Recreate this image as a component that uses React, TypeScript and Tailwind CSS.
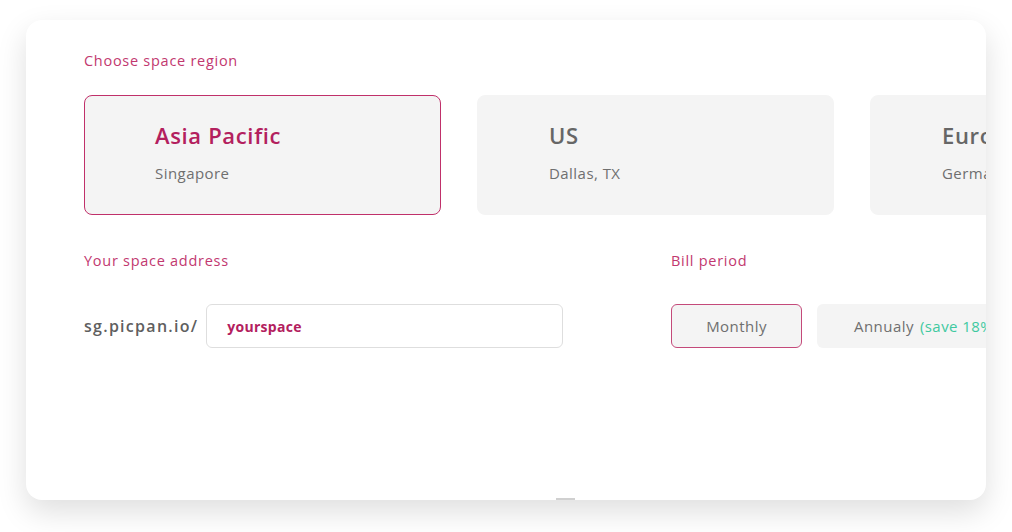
import React from "react";

interface RegionCardProps {
  title: string;
  city: string;
  selected?: boolean;
}

function RegionCard({ title, city, selected }: RegionCardProps) {
  return (
    <div
      className={
        selected
          ? "w-[357px] h-[120px] shrink-0 rounded-lg bg-[#f4f4f4] border border-[#c0306a] pl-[70px] pt-[24px]"
          : "w-[357px] h-[120px] shrink-0 rounded-lg bg-[#f4f4f4] border border-[#f4f4f4] pl-[71px] pt-[24px]"
      }
    >
      <p
        className={
          selected
            ? "text-[22px] leading-[30px] font-semibold tracking-[0.03em] text-[#b3205e]"
            : "text-[22px] leading-[30px] font-semibold tracking-[0.03em] text-[#666666]"
        }
      >
        {title}
      </p>
      <p className="mt-3 text-[15px] leading-[22px] tracking-[0.03em] text-[#6f6f6f]">{city}</p>
    </div>
  );
}

export default function App() {
  return (
    <div
      className="w-[1012px] h-[532px] bg-white pt-5 pl-[26px]"
      style={{ fontFamily: '"Open Sans", "Noto Sans", sans-serif' }}
    >
      <div className="relative w-[960px] h-[480px] rounded-2xl bg-white shadow-[0_12px_30px_rgba(0,0,0,0.13)]">
        <div className="w-full h-full overflow-hidden rounded-2xl pl-[58px] pt-[31px]">
          <p className="text-[14.5px] leading-5 tracking-[0.05em] text-[#c2386f]">Choose space region</p>

          <div className="mt-6 flex gap-9">
            <RegionCard title="Asia Pacific" city="Singapore" selected />
            <RegionCard title="US" city="Dallas, TX" />
            <RegionCard title="Europe" city="Germany" />
          </div>

          <div className="mt-9 flex">
            <div className="w-[587px] shrink-0">
              <p className="text-[14.5px] leading-5 tracking-[0.05em] text-[#c2386f]">Your space address</p>
              <div className="mt-[33px] flex items-center gap-[8px]">
                <span className="text-[16px] font-semibold tracking-[0.08em] text-[#5f5f5f]">
                  sg.picpan.io/
                </span>
                <div className="w-[357px] h-[44px] rounded-md border border-[#dedede] bg-white flex items-center pl-5">
                  <span className="text-[14px] font-bold tracking-[0.02em] text-[#b3205e]">yourspace</span>
                </div>
              </div>
            </div>

            <div className="shrink-0">
              <p className="text-[14.5px] leading-5 tracking-[0.05em] text-[#c2386f]">Bill period</p>
              <div className="mt-[33px] flex gap-[15px]">
                <div className="w-[131px] h-[44px] rounded-md border border-[#c44a7a] bg-[#f4f4f4] flex items-center justify-center">
                  <span className="text-[15px] tracking-[0.03em] text-[#6f6f6f]">Monthly</span>
                </div>
                <div className="w-[220px] h-[44px] rounded-md bg-[#f4f4f4] flex items-center pl-[37px] whitespace-nowrap">
                  <span className="text-[15px] tracking-[0.03em] text-[#6f6f6f]">Annualy</span>
                  <span className="ml-[6px] text-[15px] tracking-[0.03em] text-[#3ec9a0]">(save 18%)</span>
                </div>
              </div>
            </div>
          </div>
        </div>
        <div className="absolute bottom-0 left-[530px] w-[19px] h-[2px] bg-[#d0d0d0]" />
      </div>
    </div>
  );
}
